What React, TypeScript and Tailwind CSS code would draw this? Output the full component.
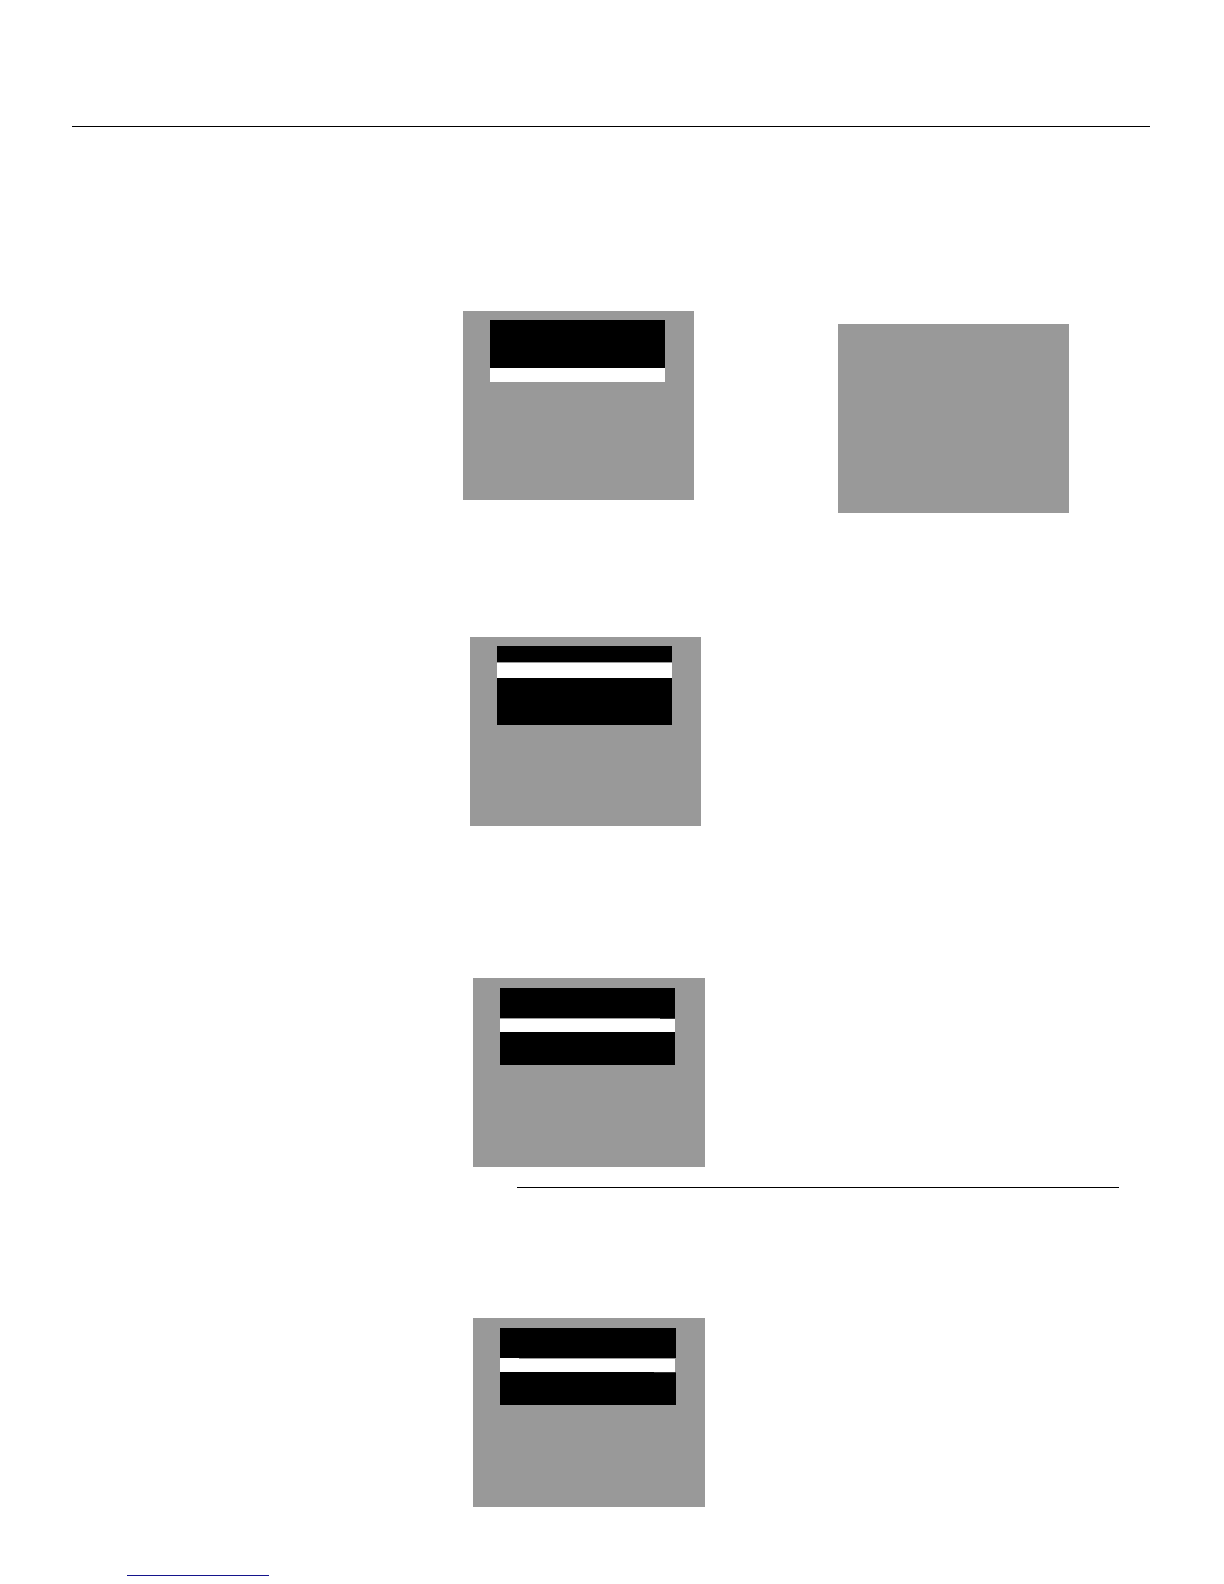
import React from "react";
import { clsx } from "clsx";

interface ScreenProps {
  className?: string;
  children?: React.ReactNode;
}

// Grey display with an optional menu near the top
const Screen: React.FC<ScreenProps> = ({ className, children }) => (
  <div className={clsx("h-[189px] shrink-0 bg-[#999999] px-[27px]", className)}>{children}</div>
);

export default function App() {
  return (
    <main className="bg-white pt-[126px] pb-2">
      <hr className="ml-[72px] mr-[74px] border-t border-black" />

      <section className="mt-[184px] flex items-start justify-between pl-[463px] pr-[155px]">
        <Screen className="w-[231px] pt-[9px]">
          <div className="w-[175px]">
            <div className="h-12 bg-black" />
            <div className="h-[14px] bg-white" />
          </div>
        </Screen>
        <Screen className="mt-[13px] w-[231px]" />
      </section>

      <section className="mt-[124px] flex pl-[470px]">
        <Screen className="w-[231px] pt-[9px]">
          <div className="w-[175px]">
            <div className="h-4 bg-black" />
            <div className="h-4 border-t border-[#999999] bg-white" />
            <div className="h-[47px] bg-black" />
          </div>
        </Screen>
      </section>

      <section className="mt-[152px] flex pl-[473px]">
        <Screen className="w-[232px] pt-[10px]">
          <div className="w-[175px]">
            <div className="h-[30px] bg-black" />
            <div className="flex h-px">
              <div className="w-40 bg-[#999999]" />
              <div className="flex-1 bg-[#333333]" />
            </div>
            <div className="h-[13px] bg-white" />
            <div className="h-[33px] bg-black" />
          </div>
        </Screen>
      </section>

      <hr className="mt-5 ml-[517px] mr-[105px] border-t border-black" />

      <section className="mt-[130px] flex pl-[473px]">
        <Screen className="w-[232px] pt-[10px]">
          <div className="w-[176px]">
            <div className="h-[30px] bg-black" />
            <div className="flex h-px">
              <div className="w-[19px] bg-white" />
              <div className="flex-1 bg-[#999999]" />
            </div>
            <div className="h-[13px] border-r border-[#999999] bg-white" />
            <div className="flex h-px">
              <div className="w-[154px] bg-black" />
              <div className="flex-1 bg-[#333333]" />
            </div>
            <div className="h-8 bg-black" />
          </div>
        </Screen>
      </section>

      <div className="mt-[68px] ml-[127px] h-px w-[142px] bg-[#14148c]" />
    </main>
  );
}
